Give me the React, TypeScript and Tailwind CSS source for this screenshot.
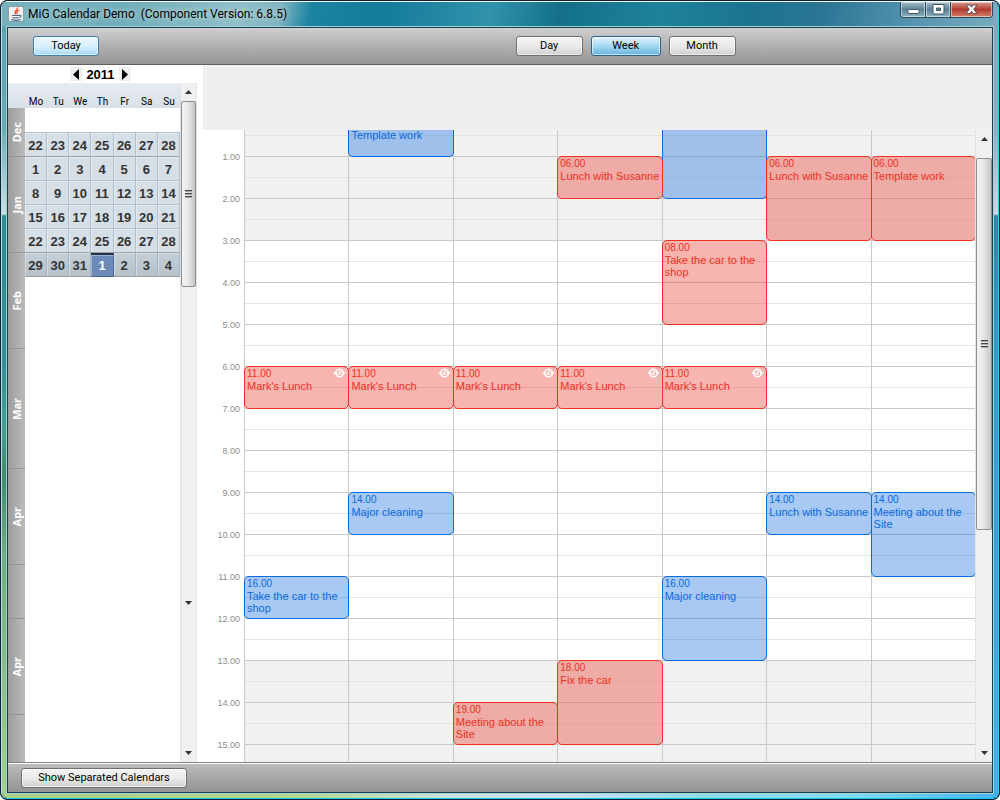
import React from 'react'

const weekDays = ['Mo', 'Tu', 'We', 'Th', 'Fr', 'Sa', 'Su']

const weeks = [
    [22, 23, 24, 25, 26, 27, 28],
    [1, 2, 3, 4, 5, 6, 7],
    [8, 9, 10, 11, 12, 13, 14],
    [15, 16, 17, 18, 19, 20, 21],
    [22, 23, 24, 25, 26, 27, 28],
    [29, 30, 31, 1, 2, 3, 4],
]

const months = [
    { name: 'Dec', size: 'h-[49px]' },
    { name: 'Jan', size: 'h-24' },
    { name: 'Feb', size: 'h-24' },
    { name: 'Mar', size: 'h-[120px]' },
    { name: 'Apr', size: 'h-24' },
    { name: '', size: 'h-[54px]' },
    { name: 'Apr', size: 'h-24' },
]

type CalendarEvent = {
    day: number
    // half hours counted from midnight
    start: number
    end: number
    time?: string
    title?: string
    color: 'red' | 'blue'
    repeats?: boolean
}

const events: CalendarEvent[] = [
    { day: 1, start: 0, end: 2, title: 'Template work', color: 'blue' },
    { day: 4, start: 0, end: 4, color: 'blue' },
    { day: 3, start: 2, end: 4, time: '06.00', title: 'Lunch with Susanne', color: 'red' },
    { day: 5, start: 2, end: 6, time: '06.00', title: 'Lunch with Susanne', color: 'red' },
    { day: 6, start: 2, end: 6, time: '06.00', title: 'Template work', color: 'red' },
    { day: 4, start: 6, end: 10, time: '08.00', title: 'Take the car to the shop', color: 'red' },
    { day: 0, start: 12, end: 14, time: '11.00', title: "Mark's Lunch", color: 'red', repeats: true },
    { day: 1, start: 12, end: 14, time: '11.00', title: "Mark's Lunch", color: 'red', repeats: true },
    { day: 2, start: 12, end: 14, time: '11.00', title: "Mark's Lunch", color: 'red', repeats: true },
    { day: 3, start: 12, end: 14, time: '11.00', title: "Mark's Lunch", color: 'red', repeats: true },
    { day: 4, start: 12, end: 14, time: '11.00', title: "Mark's Lunch", color: 'red', repeats: true },
    { day: 1, start: 18, end: 20, time: '14.00', title: 'Major cleaning', color: 'blue' },
    { day: 5, start: 18, end: 20, time: '14.00', title: 'Lunch with Susanne', color: 'blue' },
    { day: 6, start: 18, end: 22, time: '14.00', title: 'Meeting about the Site', color: 'blue' },
    { day: 0, start: 22, end: 24, time: '16.00', title: 'Take the car to the shop', color: 'blue' },
    { day: 4, start: 22, end: 26, time: '16.00', title: 'Major cleaning', color: 'blue' },
    { day: 3, start: 26, end: 30, time: '18.00', title: 'Fix the car', color: 'red' },
    { day: 2, start: 28, end: 30, time: '19.00', title: 'Meeting about the Site', color: 'red' },
]

const eventColors = {
    red: 'border-[#ee3224] bg-[rgba(237,58,42,0.38)] text-[#ee3224]',
    blue: 'border-[#0a6ae0] bg-[rgba(24,113,223,0.38)] text-[#0a6ae0]',
}

const buttonStyles = {
    plain: 'border-[#707070] from-[#f3f3f3] via-[#ebebeb] via-50% to-[#cfcfcf]',
    light: 'border-[#3c7fb1] from-[#eaf6fd] via-[#d9f0fc] via-50% to-[#a7d9f5]',
    pressed: 'border-[#2c628b] from-[#e5f4fc] via-[#98d1ef] via-60% to-[#68b3db]',
}

const BarButton = ({ label, look, size }: { label: string; look: keyof typeof buttonStyles; size: string }) => (
    <button
        type="button"
        className={`flex h-5 items-center justify-center rounded-[3px] border bg-linear-to-b font-['Roboto'] text-[11px] leading-4 whitespace-nowrap text-black inset-shadow-[0_0_0_1px_rgba(255,255,255,0.6)] ${size} ${buttonStyles[look]}`}
    >
        {label}
    </button>
)

const JavaIcon = () => (
    <svg viewBox="0 0 16 16" className="size-4" aria-hidden="true">
        <rect x="0.5" y="0.5" width="15" height="15" rx="1.5" fill="#f1f1f1" stroke="#8d9ba3" />
        <path d="M9.500 1.500C10.500 4 5.500 4.500 7.500 8.500M11.500 4C8.500 5 8 6 9.500 8.500" fill="none" stroke="#e8562a" strokeWidth="1.300" />
        <path d="M4 9.500h7M4.500 11.500c2 .7 4 .7 6 0M11 9.500c3-.8 2.500 1.600.2 2M3 13.500c3 1 7 1 10 0" fill="none" stroke="#4a6f8f" strokeWidth="1.100" />
    </svg>
)

const RepeatIcon = () => (
    <svg viewBox="0 0 13 10" className="mr-0.5 h-2.5 w-[13px]" aria-hidden="true">
        <ellipse cx="6.500" cy="5" rx="3.800" ry="3.800" fill="none" stroke="#fff" strokeWidth="1.500" />
        <path d="M0 6h5.200L2.600 3.200zM7.800 4H13l-2.600 2.800z" fill="#fff" />
        <path d="M8.300 3.600c-1.400-.8-3 0-1.800 1.200s0 2.200-1.700 1.500" fill="none" stroke="#fff" strokeWidth="1.100" />
    </svg>
)

const Arrow = ({ up }: { up?: boolean }) => (
    <button type="button" aria-label={up ? 'Scroll up' : 'Scroll down'} className="flex h-[18px] w-full shrink-0 items-center justify-center">
        <svg viewBox="0 0 7 4" className="h-1 w-[7px]">
            <path d={up ? 'M3.500 0L7 4H0z' : 'M0 0h7L3.500 4z'} fill="#333" />
        </svg>
    </button>
)

const Thumb = ({ size }: { size: string }) => (
    <div className={`flex shrink-0 items-center justify-center rounded-[2px] border border-[#8f8f8f] bg-linear-to-r from-[#f5f5f5] via-[#e6e6e6] via-50% to-[#c4c4c4] ${size}`}>
        <svg viewBox="0 0 7 8" className="h-2 w-[7px]">
            <path d="M0 .5h7M0 3.500h7M0 6.500h7" stroke="#444" />
            <path d="M0 1.500h7M0 4.500h7M0 7.500h7" stroke="#aaa" />
        </svg>
    </div>
)

const TitleBar = () => (
    <header className="flex h-6 items-center bg-[linear-gradient(100deg,#76b3be_0%,#6fadb9_12%,#8fbfc8_24%,#7db3c0_28%,#1c84a2_31%,#137b9b_38%,#3292ab_49%,#147089_56%,#1f829a_66%,#1b7490_75%,#2a7594_82%,#4f8fab_90%,#79adc0_100%)] pr-[5px] pl-1.5">
        <JavaIcon />
        <h1 className="ml-1 font-['Roboto'] text-[12px] leading-5 whitespace-pre text-black text-shadow-[0_0_6px_rgba(255,255,255,0.8)]">
            MiG Calendar Demo  (Component Version: 6.8.5)
        </h1>
        <div className="ml-auto flex h-4 self-start overflow-hidden rounded-b-[4px] border border-t-0 border-[#284a5c]">
            <button type="button" aria-label="Minimize" className="flex w-[25px] items-center justify-center border-r border-[#284a5c] bg-linear-to-b from-[#a5c0cc] via-[#5b8194] via-50% to-[#90b4c1] inset-shadow-[0_0_0_1px_rgba(255,255,255,0.5)]">
                <svg viewBox="0 0 13 11" className="h-[11px] w-[13px]">
                    <rect x="1" y="5.500" width="11" height="4" rx="1" fill="#fff" stroke="#455763" />
                </svg>
            </button>
            <button type="button" aria-label="Maximize" className="flex w-[25px] items-center justify-center border-r border-[#284a5c] bg-linear-to-b from-[#a5c0cc] via-[#5b8194] via-50% to-[#90b4c1] inset-shadow-[0_0_0_1px_rgba(255,255,255,0.5)]">
                <svg viewBox="0 0 13 11" className="h-[11px] w-[13px]">
                    <path fillRule="evenodd" d="M1 .5h11v9.500H1zM4.500 4h4v2.500h-4z" fill="#fff" stroke="#455763" />
                </svg>
            </button>
            <button type="button" aria-label="Close" className="flex w-[41px] items-center justify-center bg-linear-to-b from-[#d99a8e] via-[#b03a2e] via-50% to-[#d4806c] inset-shadow-[0_0_0_1px_rgba(255,255,255,0.5)]">
                <svg viewBox="0 0 13 11" className="h-[11px] w-[13px]">
                    <path d="M1 1h3.700l1.800 2.200L8.300 1H12L8.600 5.200 12 9.500H8.300L6.500 7.300 4.700 9.500H1l3.400-4.300z" fill="#fff" stroke="#4a4a5a" strokeWidth=".9" />
                </svg>
            </button>
        </div>
    </header>
)

const Toolbar = () => (
    <div className="flex h-[37px] shrink-0 items-center border-b border-[#5f5f5f] bg-linear-to-b from-[#cfcfcf] to-[#949494] pl-[25px]">
        <BarButton label="Today" look="light" size="w-[66px]" />
        <div className="flex-[13]" />
        <div className="flex gap-2">
            <BarButton label="Day" look="plain" size="w-[67px]" />
            <BarButton label="Week" look="pressed" size="w-[70px]" />
            <BarButton label="Month" look="plain" size="w-[67px]" />
        </div>
        <div className="flex-[8]" />
    </div>
)

const MonthStrip = () => (
    <div className="flex w-[17px] shrink-0 flex-col">
        <div className="h-[25px] shrink-0 bg-linear-to-b from-[#e6ecf1] to-[#d9e0e7]" />
        <div className="flex-1 bg-linear-to-r from-[#9d9d9d] to-[#bbbbbb]">
            {months.map((month, i) => (
                <div key={i} className={`flex items-center justify-center border-b border-[#949494] ${month.size}`}>
                    <span className="rotate-180 text-[11px] leading-4 font-bold text-white [writing-mode:vertical-rl]">{month.name}</span>
                </div>
            ))}
        </div>
    </div>
)

const dayClass = (row: number, col: number) => {
    if (row === 5 && col === 3) return 'border-[#4c6694] border-t-2 border-t-[#26324a] bg-[#6d89b8] pt-0 text-white'
    if (row === 5) return 'border-r-[#a2b5c6] border-b-[#9a9a9a] bg-linear-to-b from-[#c4ced7] to-[#b6c2cb] pt-0.5 text-[#333]'
    if (row === 0 || row === 4) return 'border-r-[#aebfd0] border-b-[#9f9f9f] bg-[#d6dfe6] pt-0.5 text-[#333]'
    return 'border-r-[#aebfd0] border-b-[#aebfd0] bg-[#d6dfe6] pt-0.5 text-[#333]'
}

const MiniCalendar = () => (
    <table className="w-full table-fixed border-separate border-spacing-0">
        <thead>
            <tr className="h-[25px] bg-linear-to-b from-[#e6ecf1] to-[#d9e0e7]">
                {weekDays.map((day) => (
                    <th key={day} className="p-0 text-center align-bottom font-['Roboto'] text-[10px] leading-3 font-normal text-black">{day}</th>
                ))}
            </tr>
        </thead>
        <tbody>
            <tr className="h-[25px]">
                <td colSpan={7} className="border-b border-[#aebfd0] p-0"></td>
            </tr>
            {weeks.map((week, row) => (
                <tr key={row} className="h-6">
                    {week.map((day, col) => (
                        <td key={col} className={`border-r border-b px-0 pb-0 text-center font-['Liberation_Sans'] text-[13px] leading-4 font-bold inset-shadow-[1px_1px_0_rgba(255,255,255,0.35)] ${dayClass(row, col)}`}>
                            {day}
                        </td>
                    ))}
                </tr>
            ))}
        </tbody>
    </table>
)

const Sidebar = () => (
    <aside className="flex w-[195px] shrink-0 flex-col bg-white pr-1.5">
        <div className="flex h-[18px] items-center justify-center pr-1">
            <button type="button" aria-label="Previous year" className="flex h-3.5 w-3 items-center justify-center bg-[#efefef]">
                <svg viewBox="0 0 6 11" className="h-[11px] w-1.5"><path d="M6 0v11L0 5.500z" /></svg>
            </button>
            <span className="px-1 pt-0.5 font-['Liberation_Sans'] text-[13px] leading-4 font-bold text-black">2011</span>
            <button type="button" aria-label="Next year" className="flex h-3.5 w-3 items-center justify-center bg-[#efefef]">
                <svg viewBox="0 0 6 11" className="h-[11px] w-1.5"><path d="M0 0v11l6-5.500z" /></svg>
            </button>
        </div>
        <div className="flex flex-1">
            <MonthStrip />
            <div className="flex-1">
                <MiniCalendar />
            </div>
            <div className="flex w-[17px] flex-col border-x border-[#e3e3e3] bg-[#f0f0f0]">
                <Arrow up />
                <Thumb size="h-[186px]" />
                <div className="flex-1" />
                <Arrow />
                <div className="h-[132px]" />
                <Arrow />
            </div>
        </div>
    </aside>
)

const EventBox = ({ event }: { event: CalendarEvent }) => {
    const clipped = event.start === 0
    return (
        <div
            className={`relative -mr-px overflow-hidden border pl-0.5 ${clipped ? 'rounded-b-[5px] border-t-0' : '-mt-px rounded-[5px] pt-px'} ${eventColors[event.color]}`}
            style={{ gridColumn: event.day + 2, gridRow: `${event.start + 1} / ${event.end + 1}` }}
        >
            {event.time && (
                <div className="flex justify-between">
                    <span className="text-[10px] leading-3">{event.time}</span>
                    {event.repeats && <RepeatIcon />}
                </div>
            )}
            {event.title && <p className={`text-[11px] ${clipped ? 'leading-[10px]' : 'leading-3'}`}>{event.title}</p>}
        </div>
    )
}

const WeekView = () => {
    const slots = Array.from({ length: 31 }, (_, i) => i)
    return (
        <div className="grid flex-1 grid-cols-[41px_repeat(7,minmax(0,1fr))] grid-rows-[6px_repeat(29,21px)_minmax(17px,1fr)] overflow-hidden bg-white font-['Liberation_Sans']">
            {slots.map((i) => (
                <div
                    key={i}
                    className={`col-start-2 -col-end-1 ${i === 30 ? '' : i % 2 ? 'border-b border-[#c9c9c9]' : 'border-b border-[#e3e3e3]'} ${i < 6 || i > 25 ? 'bg-[#f1f1f1]' : ''}`}
                    style={{ gridRow: i + 1 }}
                />
            ))}
            {weekDays.map((day, i) => (
                <div key={day} className="row-start-1 -row-end-1 border-l border-[#c9c9c9]" style={{ gridColumn: i + 2 }} />
            ))}
            {Array.from({ length: 15 }, (_, i) => (
                <span
                    key={i}
                    className="col-start-1 translate-y-1/2 self-end pr-1 text-right text-[9px] leading-3 text-[#8c8c8c]"
                    style={{ gridRow: (i + 1) * 2 }}
                >
                    {i + 1}.00
                </span>
            ))}
            {events.map((event, i) => (
                <EventBox key={i} event={event} />
            ))}
        </div>
    )
}

const App = () => {
    return (
        <div className="bg-white font-['Noto_Sans',sans-serif]">
            <div className="flex min-h-screen flex-col overflow-hidden rounded-[7px] border border-[#0b2233] bg-[#0b2233]">
                <div className="flex flex-1 flex-col overflow-hidden rounded-[6px] border border-t-white border-r-[#35d0f5] border-b-[#22c4ef] border-l-[#b9dde0]">
                    <TitleBar />
                    <div className="flex flex-1">
                        <div className="w-1 bg-[linear-gradient(to_bottom,#5fa3b1_0px,#6aa9b2_100px,#c9e0e4_188px,#2b8f93_190px,#2f8f95_330px,#43a08f_400px,#458a6e_450px,#6fae80_530px,#a5cf8a_100%)]" />
                        <div className="flex min-w-0 flex-1 flex-col border border-[#a3d3d6]">
                            <div className="flex flex-1 flex-col border border-[#17404f]">
                                <Toolbar />
                                <main className="flex flex-1">
                                    <Sidebar />
                                    <section className="flex min-w-0 flex-1 flex-col">
                                        <div className="h-[65px] shrink-0 bg-[#efefef]" />
                                        <div className="flex flex-1">
                                            <WeekView />
                                            <div className="flex w-[17px] flex-col border-l border-[#e3e3e3] bg-[#f0f0f0]">
                                                <Arrow up />
                                                <div className="h-2.5" />
                                                <Thumb size="h-[372px]" />
                                                <div className="flex-1" />
                                                <Arrow />
                                            </div>
                                        </div>
                                    </section>
                                </main>
                                <footer className="flex h-[30px] shrink-0 items-center border-t border-[#7f7f7f] bg-linear-to-b from-[#bdbdbd] to-[#949494] pl-[13px] inset-shadow-[0_1px_0_#fff]">
                                    <BarButton label="Show Separated Calendars" look="plain" size="w-[166px]" />
                                </footer>
                            </div>
                        </div>
                        <div className="w-1 bg-[linear-gradient(to_bottom,#79adc0_0px,#7db4c4_100px,#c4dce6_188px,#2b87a5_190px,#2f9ccc_330px,#3aa0d8_500px,#43b0ee_100%)]" />
                    </div>
                    <div className="h-1 bg-[linear-gradient(to_right,#a9cf80_0%,#b5d68d_30%,#c6e4d8_44%,#cfe2f5_56%,#8fdde8_70%,#7fdcf2_85%,#43b4f4_100%)]" />
                </div>
            </div>
        </div>
    )
}

export default App
